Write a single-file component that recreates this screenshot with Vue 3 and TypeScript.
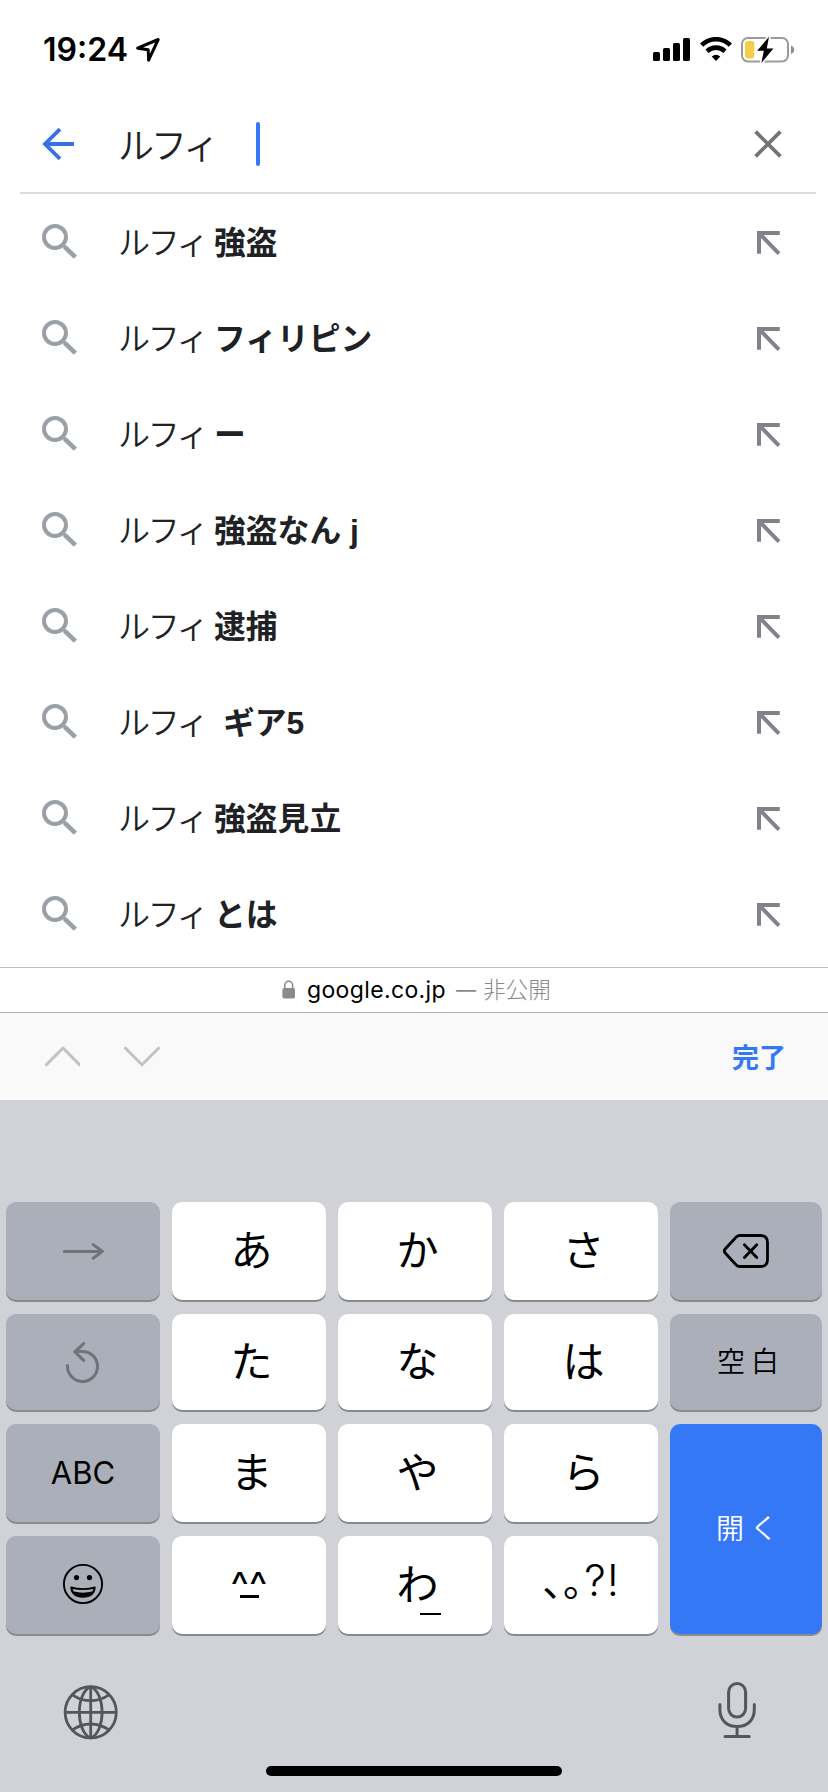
<script setup lang="ts">
import { ref } from 'vue'

interface Suggestion {
  typed: string
  rest: string
  spaced?: boolean
}

interface Key {
  label: string
  kind: string
}

const query = ref('ルフィ')

const suggestions: Suggestion[] = [
  { typed: 'ルフィ', rest: '強盗' },
  { typed: 'ルフィ', rest: 'フィリピン' },
  { typed: 'ルフィ', rest: 'ー' },
  { typed: 'ルフィ', rest: '強盗なん j' },
  { typed: 'ルフィ', rest: '逮捕' },
  { typed: 'ルフィ', rest: 'ギア5', spaced: true },
  { typed: 'ルフィ', rest: '強盗見立' },
  { typed: 'ルフィ', rest: 'とは' },
]

const keys: Key[] = [
  { label: '', kind: 'next' },
  { label: 'あ', kind: 'kana' },
  { label: 'か', kind: 'kana' },
  { label: 'さ', kind: 'kana' },
  { label: '', kind: 'delete' },
  { label: '', kind: 'undo' },
  { label: 'た', kind: 'kana' },
  { label: 'な', kind: 'kana' },
  { label: 'は', kind: 'kana' },
  { label: '空白', kind: 'space' },
  { label: 'ABC', kind: 'abc' },
  { label: 'ま', kind: 'kana' },
  { label: 'や', kind: 'kana' },
  { label: 'ら', kind: 'kana' },
  { label: '開く', kind: 'enter' },
  { label: '', kind: 'emoji' },
  { label: '^^', kind: 'face' },
  { label: 'わ', kind: 'wa' },
  { label: '､｡', kind: 'punct' },
]
</script>

<template>
  <div class="screen">
    <header class="status">
      <span class="time">19:24</span>
      <svg class="location" width="26" height="26" viewBox="0 0 26 26">
        <path d="M23.2 2.5 L2.6 11.2 L13.2 12.8 L13.6 23.2 Z" fill="none" stroke="#000" stroke-width="3" stroke-linejoin="round" />
      </svg>
      <svg class="signal" width="37" height="24" viewBox="0 0 37 24">
        <rect x="0" y="14" width="7" height="9" rx="1.6" />
        <rect x="10" y="10" width="7" height="13" rx="1.6" />
        <rect x="20" y="5" width="7" height="18" rx="1.6" />
        <rect x="30" y="0" width="7" height="23" rx="1.6" />
      </svg>
      <svg class="wifi" width="32" height="24" viewBox="0 0 32 24">
        <path d="M1.6 8.2 C9.8 0.2 22.2 0.2 30.4 8.2" fill="none" stroke="#000" stroke-width="4.6" />
        <path d="M7 14.2 C12.4 9.4 19.6 9.4 25 14.2" fill="none" stroke="#000" stroke-width="4.6" />
        <path d="M16 24 L11.7 19.5 Q16 16 20.3 19.5 Z" />
      </svg>
      <svg class="battery" width="54" height="28" viewBox="0 0 54 28">
        <rect x="1" y="2" width="46" height="23.5" rx="6" fill="none" stroke="#9b9b9b" stroke-width="2" />
        <path d="M50 9.6 Q53.2 11 53.2 13.8 Q53.2 16.6 50 18 Z" fill="#8c8c8c" />
        <rect x="4" y="5" width="9.4" height="17.4" rx="3" fill="#f5cd46" />
        <path d="M28 0.8 L16.2 14.8 H22.8 L20.4 27 L32.4 12.4 H25.8 Z" fill="#000" stroke="#fff" stroke-width="3.4" paint-order="stroke" />
      </svg>
    </header>

    <div class="search">
      <svg class="back" width="34" height="34" viewBox="0 0 34 34">
        <path d="M18 2.2 L3 17 L18 31.8 M3 17 H32" fill="none" stroke="#3871e0" stroke-width="3.8" />
      </svg>
      <span class="query">{{ query }}</span>
      <span class="caret"></span>
      <svg class="clear" width="28" height="28" viewBox="0 0 28 28">
        <path d="M1.6 1.6 L26.4 26.4 M26.4 1.6 L1.6 26.4" fill="none" stroke="#70757a" stroke-width="3.7" />
      </svg>
    </div>

    <ul class="list">
      <li v-for="item in suggestions" :key="item.rest" class="row">
        <svg class="glass" width="36" height="36" viewBox="0 0 36 36">
          <circle cx="13" cy="13" r="11" fill="none" stroke="#9b9fa6" stroke-width="4" />
          <path d="M22.6 22.8 L33.4 33.2" fill="none" stroke="#9b9fa6" stroke-width="4.6" />
          <path d="M20 20 L23.5 23.5" fill="none" stroke="#9b9fa6" stroke-width="3" />
        </svg>
        <span class="typed">{{ item.typed }}</span>
        <b class="rest" :class="{ spaced: item.spaced }">{{ item.rest }}</b>
        <svg class="insert" width="24" height="24" viewBox="0 0 24 24">
          <path d="M22.8 2 H2 V22.8 M3 3 L22 22.6" fill="none" stroke="#80848a" stroke-width="4" />
        </svg>
      </li>
    </ul>

    <div class="address">
      <svg class="lock" width="14" height="20" viewBox="0 0 14 20">
        <rect x="0.4" y="8" width="12.6" height="10.6" rx="1.8" fill="#8a8a8c" />
        <path d="M2.8 9 V5.4 A3.9 4.2 0 0 1 10.6 5.4 V9" fill="none" stroke="#8a8a8c" stroke-width="1.6" />
      </svg>
      <span class="domain">google.co.jp</span>
      <span class="dash">—</span>
      <span class="private">非公開</span>
    </div>

    <div class="toolbar">
      <svg width="36" height="22" viewBox="0 0 36 22">
        <path d="M2.5 18.6 L19 2 L35.5 18.6" fill="none" stroke="#c2c2c2" stroke-width="3" stroke-linecap="round" stroke-linejoin="round" />
      </svg>
      <svg class="down" width="36" height="22" viewBox="0 0 36 22">
        <path d="M1.5 2.2 L18 18.8 L34.5 2.2" fill="none" stroke="#c2c2c2" stroke-width="3" stroke-linecap="round" stroke-linejoin="round" />
      </svg>
      <span class="done">完了</span>
    </div>

    <div class="keyboard">
      <div class="keys">
        <div v-for="(key, i) in keys" :key="i" class="key" :class="key.kind">
          <svg v-if="key.kind === 'next'" width="42" height="20" viewBox="0 0 42 20">
            <path d="M2.4 10.4 H40 M31.2 3.6 L40.4 10.4 L31.2 17.2" fill="none" stroke="#6f7279" stroke-width="3" stroke-linecap="round" stroke-linejoin="round" />
          </svg>
          <svg v-else-if="key.kind === 'delete'" width="48" height="36" viewBox="0 0 48 36">
            <path d="M17.8 2.5 H38.5 Q45.5 2.5 45.5 9.5 V26.5 Q45.5 33.5 38.5 33.5 H17.8 Q15.8 33.5 14.2 32 L3 19.8 Q1.6 18 3 16.2 L14.2 4 Q15.8 2.5 17.8 2.5 Z" fill="none" stroke="#000" stroke-width="2.8" />
            <path d="M22.4 11.8 L34.8 24.4 M34.8 11.8 L22.4 24.4" fill="none" stroke="#000" stroke-width="2.8" stroke-linecap="round" />
          </svg>
          <svg v-else-if="key.kind === 'undo'" width="36" height="42" viewBox="0 0 36 42">
            <path d="M2.5 24.6 A15 15 0 1 0 17.5 10.4 Q14.5 10.2 10.4 10.8 M18.6 2.6 L9.8 10.8 L18.6 19.4" fill="none" stroke="#6f7279" stroke-width="3" stroke-linecap="round" stroke-linejoin="round" />
          </svg>
          <svg v-else-if="key.kind === 'emoji'" width="42" height="42" viewBox="0 0 42 42">
            <circle cx="21" cy="21" r="19.1" fill="none" stroke="#000" stroke-width="1.9" />
            <circle cx="14.5" cy="14.6" r="2.6" />
            <circle cx="27.5" cy="14.6" r="2.6" />
            <path d="M8.9 24.2 Q21 27.6 33.1 24.2 Q32.4 34 21 34.2 Q9.6 34 8.9 24.2 Z" fill="#000" stroke="#000" stroke-width="1.2" stroke-linejoin="round" />
            <path d="M10.6 26 Q21 28.2 31.4 26 Q31 27.8 30.2 28.6 Q21 30.8 11.8 28.6 Q11 27.8 10.6 26 Z" fill="#abafba" />
          </svg>
          <template v-else-if="key.kind === 'face'"><span>{{ key.label }}</span><span class="mouth"></span></template>
          <template v-else-if="key.kind === 'wa'">{{ key.label }}<span class="under"></span></template>
          <span v-else-if="key.kind === 'punct'">{{ key.label }}<span class="latin">?!</span></span>
          <span v-else>{{ key.label }}</span>
        </div>
      </div>
      <div class="footer">
        <svg class="globe" width="56" height="56" viewBox="0 0 56 56" fill="none" stroke="#53565b" stroke-width="2.8">
          <circle cx="27.7" cy="28.3" r="25.6" />
          <path d="M27.7 2.5 V54 M2 28.3 H53.4" />
          <path d="M27.7 2.6 C12.5 9 12.5 47.6 27.7 54 C42.9 47.6 42.9 9 27.7 2.6" />
          <path d="M9.4 10.8 Q18 16.6 27.7 16.6 Q37.4 16.6 46 10.8 M9.4 45.8 Q18 40 27.7 40 Q37.4 40 46 45.8" />
        </svg>
        <svg width="38" height="58" viewBox="0 0 38 58" fill="none" stroke="#53565b" stroke-width="3" stroke-linecap="round">
          <rect x="10.6" y="2.5" width="17" height="33.6" rx="8.5" />
          <path d="M1.9 23.4 V28.6 C1.9 39.4 9 45.6 19.1 45.6 C29.2 45.6 36.3 39.4 36.3 28.6 V23.4 M19.1 46 V55 M7 55.6 H31.2" />
        </svg>
      </div>
      <div class="home"></div>
    </div>
  </div>
</template>

<style>
body {
  margin: 0;
  background: #fff;
}
</style>

<style scoped>
.screen {
  width: 828px;
  height: 1792px;
  overflow: hidden;
  display: flex;
  flex-direction: column;
  background: #fff;
  color: #202124;
  font-family: Inter, "Noto Sans CJK JP", sans-serif;
}
.screen svg {
  flex: none;
  display: block;
}
.status {
  height: 96px;
  display: flex;
  align-items: flex-start;
  padding: 0 33px 0 43px;
  box-sizing: border-box;
  color: #000;
}
.time {
  width: 92px;
  margin-top: 30px;
  font-size: 32px;
  line-height: 40px;
  font-weight: 600;
  white-space: nowrap;
}
.location { margin-top: 37px; }
.signal { margin: 38px 0 0 auto; }
.wifi { margin: 37px 0 0 10px; }
.battery { margin: 36px 0 0 9px; }

.search {
  height: 96px;
  margin: 0 12px 0 20px;
  padding: 0 34px 0 22px;
  display: flex;
  align-items: center;
  border-bottom: 2px solid #dadbe0;
}
.query {
  width: 137px;
  margin: -3px 0 0 42px;
  font-family: "Noto Sans CJK JP", sans-serif;
  font-weight: 350;
  font-size: 36px;
  line-height: 48px;
  letter-spacing: -3px;
  white-space: nowrap;
}
.caret {
  width: 4px;
  height: 44px;
  margin-left: 1px;
  border-radius: 2px;
  background: #3478f6;
}
.clear { margin-left: auto; }

.list {
  margin: 0;
  padding: 0;
  list-style: none;
}
.row {
  height: 96px;
  display: flex;
  align-items: center;
  padding: 0 47px 0 42px;
  font-family: "Noto Sans CJK JP", sans-serif;
  font-size: 32px;
  line-height: 48px;
}
.typed {
  width: 96px;
  margin: -4px 0 0 40px;
  font-weight: 350;
  letter-spacing: -2.3px;
  white-space: nowrap;
}
.rest {
  margin-top: 1px;
  font-weight: 700;
  font-size: 31.8px;
  font-family: "Liberation Sans", "Noto Sans CJK JP", sans-serif;
}
.spaced { margin-left: 9px; }
.insert { margin: 1px 0 0 auto; }

.address {
  height: 44px;
  margin-top: 5px;
  border-top: 1px solid #c0c0c0;
  border-bottom: 1px solid #b0b0b2;
  display: flex;
  align-items: center;
  padding-left: 282px;
  font-size: 23px;
  line-height: 32px;
  color: #8a8a8c;
}
.domain {
  width: 149px;
  margin-left: 11px;
  letter-spacing: 0.36px;
  color: #000;
}
.dash {
  width: 27px;
  font-size: 20px;
}
.private {
  margin-top: -3px;
  font-family: "Noto Sans CJK JP", sans-serif;
  font-weight: 300;
  font-size: 22.6px;
}

.toolbar {
  height: 87px;
  display: flex;
  align-items: center;
  padding: 0 42px 0 44px;
  background: #f9f9f9;
}
.down { margin-left: 44px; }
.done {
  margin-left: auto;
  font-family: "Noto Sans CJK JP", sans-serif;
  font-weight: 700;
  font-size: 27px;
  color: #3478f6;
}

.keyboard {
  flex: 1;
  background: #d1d2d8;
  display: flex;
  flex-direction: column;
}
.keys {
  margin: 102px 6px 0;
  display: grid;
  grid-template-columns: 154px 154px 154px 154px 152px;
  grid-template-rows: 98px 96px 98px 98px;
  gap: 14px 12px;
}
.key {
  box-sizing: border-box;
  display: flex;
  align-items: center;
  justify-content: center;
  border-radius: 10px;
  background: #abafba;
  box-shadow: 0 2px 0 #898a8d;
  color: #000;
  font-size: 28px;
  line-height: 1;
  font-family: "Noto Sans CJK JP", sans-serif;
}
.kana, .wa, .punct {
  padding: 0 0 7px 5px;
  background: #fff;
  font-size: 42px;
}
.enter {
  grid-row: span 2;
  padding: 0 0 4px 8px;
  background: #3478f6;
  color: #fff;
}
.space { padding: 0 0 5px 10px; }
.space, .enter {
  font-weight: 350;
  letter-spacing: 6px;
}
.abc {
  padding-bottom: 1px;
  font-family: Inter, sans-serif;
  font-size: 31px;
}
.emoji { padding-bottom: 2px; }
.face {
  flex-direction: column;
  justify-content: flex-start;
  padding-top: 29px;
  background: #fff;
  font-family: Inter, sans-serif;
  font-size: 39px;
}
.mouth {
  width: 19px;
  height: 3px;
  margin-top: -9px;
  background: #000;
}
.wa { position: relative; }
.under {
  position: absolute;
  left: 82px;
  top: 77px;
  width: 21px;
  height: 2px;
  background: #000;
}
.punct {
  padding: 0 0 9px 1px;
  font-size: 40px;
}
.latin {
  margin-left: 1px;
  font-family: Inter, sans-serif;
  font-weight: 300;
  font-size: 43px;
  letter-spacing: 1px;
}
.footer {
  display: flex;
  justify-content: space-between;
  align-items: flex-start;
  margin-top: 47px;
  padding: 0 72px 0 63px;
}
.globe { margin-top: 3px; }
.home {
  width: 296px;
  height: 10px;
  margin: 26px auto 0;
  border-radius: 5px;
  background: #000;
}
</style>
